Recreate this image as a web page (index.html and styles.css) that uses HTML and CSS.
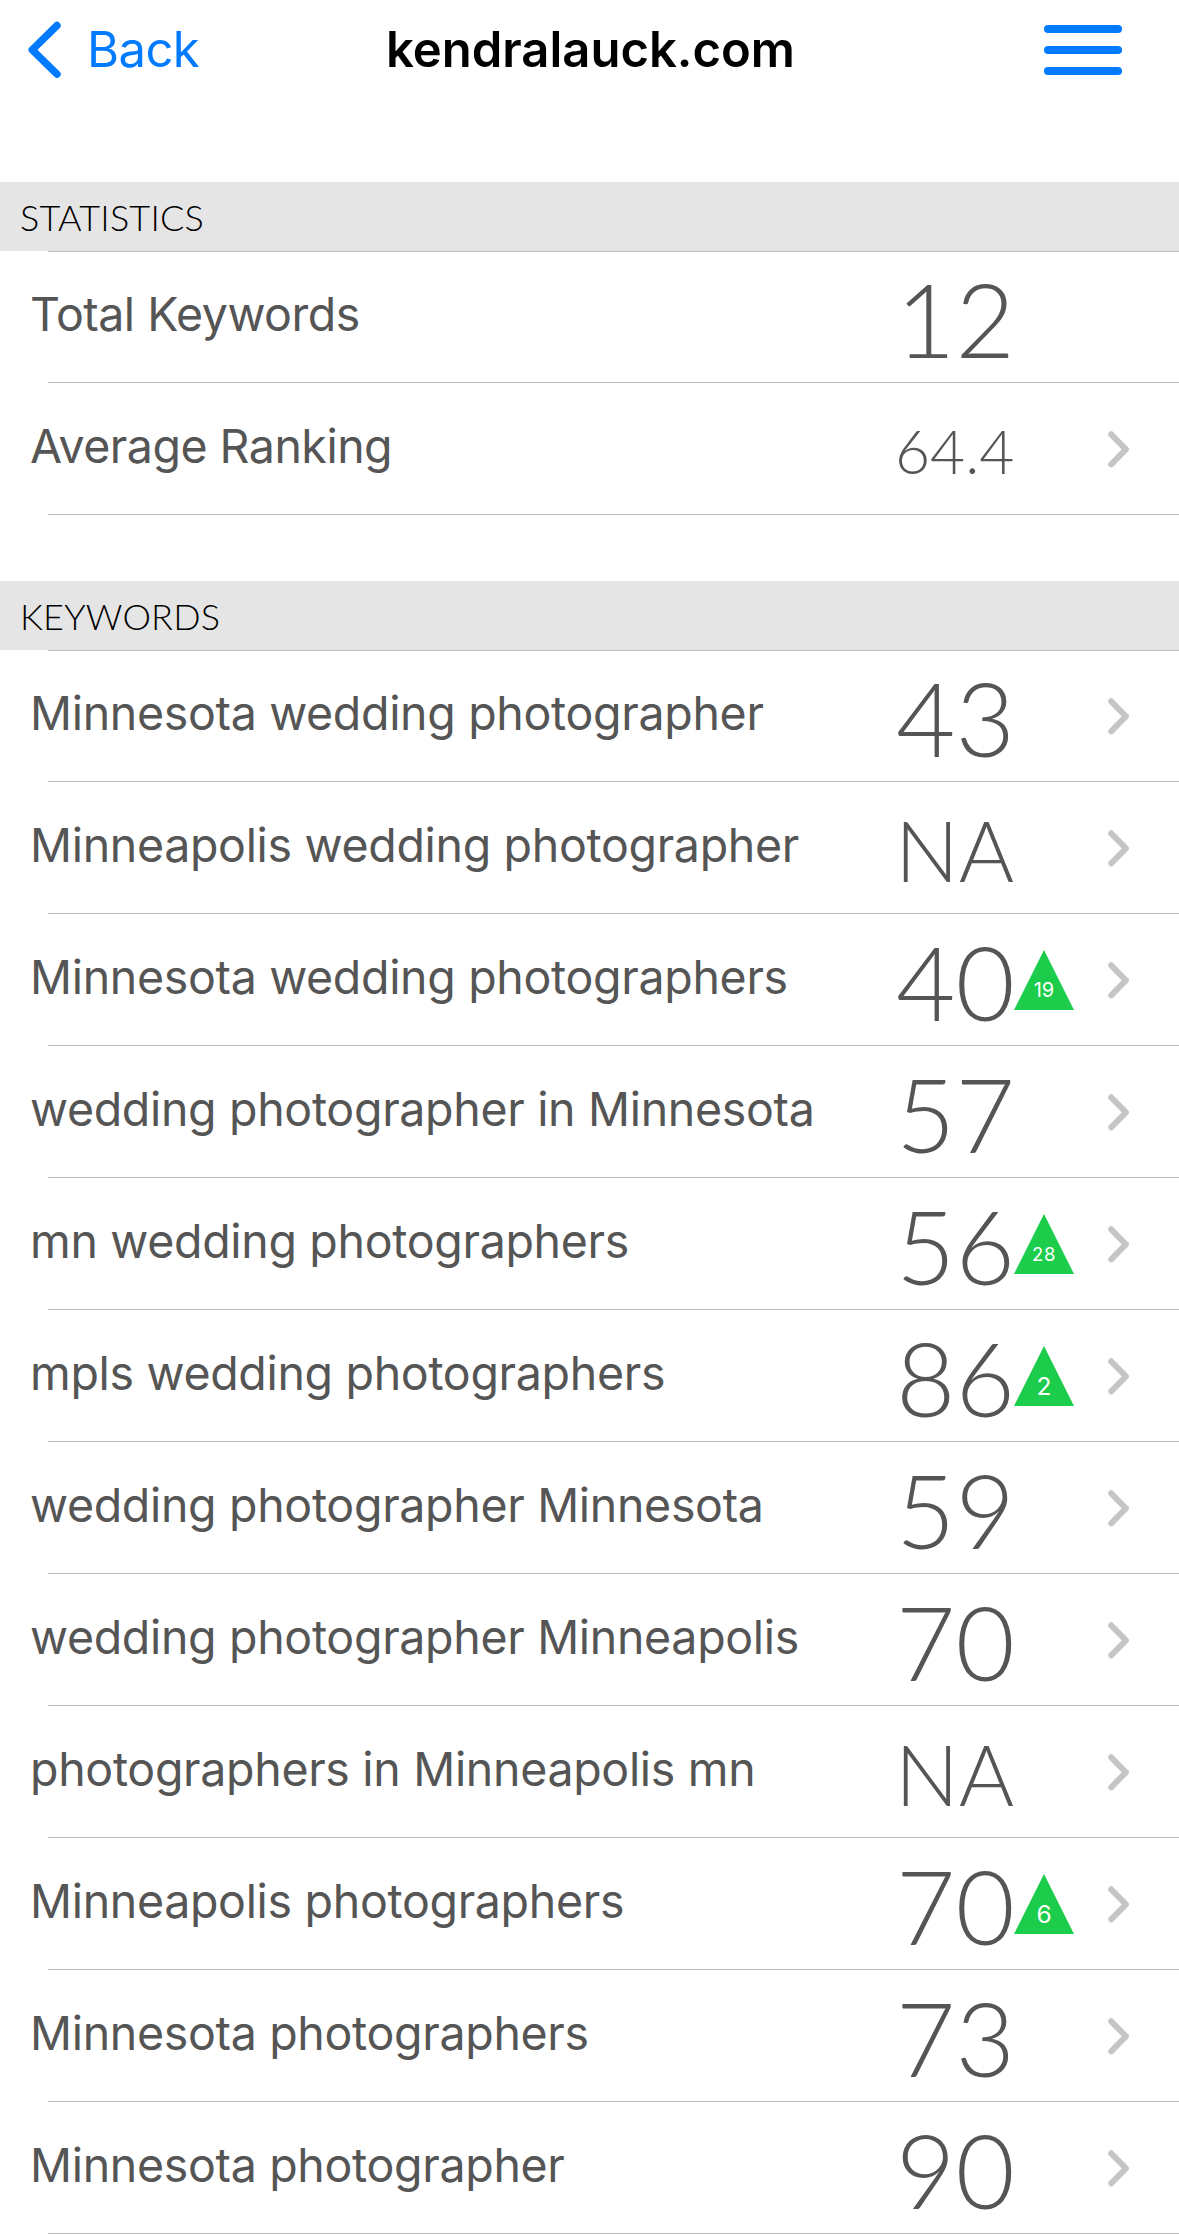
FILE: index.html
```
<!DOCTYPE html>
<html lang="en">
<head>
    <meta charset="UTF-8">
    <meta name="viewport" content="width=device-width, initial-scale=1.0">
    <title>kendralauck.com</title>
    <link rel="stylesheet" href="styles.css">
</head>
<body>
    <svg class="defs" width="0" height="0">
        <symbol id="chevron" viewBox="0 0 21 37">
            <path d="M3.2 3.3 L17.9 18.3 L3.2 33.3" fill="none" stroke="#c5c5c7" stroke-width="6" stroke-linecap="round" stroke-linejoin="round"/>
        </symbol>
    </svg>

    <!-- Navigation bar -->
    <header class="navbar">
        <a class="back">
            <svg class="back-icon" viewBox="0 0 33 58">
                <path d="M29 4.5 L4.2 28.8 L29 53.2" fill="none" stroke="#007aff" stroke-width="7.4" stroke-linecap="round" stroke-linejoin="round"/>
            </svg>
            <span>Back</span>
        </a>
        <h1 class="title">kendralauck.com</h1>
        <div class="menu">
            <span></span>
            <span></span>
            <span></span>
        </div>
    </header>

    <!-- Statistics -->
    <section class="section">
        <h2 class="section-title">Statistics</h2>
        <ul class="list">
            <li class="row">
                <span class="label stat">Total Keywords</span>
                <span class="value">12</span>
            </li>
            <li class="row">
                <span class="label stat">Average Ranking</span>
                <span class="value decimal">64.4</span>
                <svg class="chevron"><use href="#chevron"/></svg>
            </li>
        </ul>
    </section>

    <!-- Keywords -->
    <section class="section">
        <h2 class="section-title">Keywords</h2>
        <ul class="list">
            <li class="row">
                <span class="label">Minnesota wedding photographer</span>
                <span class="value">43</span>
                <svg class="chevron"><use href="#chevron"/></svg>
            </li>
            <li class="row">
                <span class="label">Minneapolis wedding photographer</span>
                <span class="value na">NA</span>
                <svg class="chevron"><use href="#chevron"/></svg>
            </li>
            <li class="row">
                <span class="label">Minnesota wedding photographers</span>
                <span class="value">40</span>
                <span class="up">19</span>
                <svg class="chevron"><use href="#chevron"/></svg>
            </li>
            <li class="row">
                <span class="label">wedding photographer in Minnesota</span>
                <span class="value">57</span>
                <svg class="chevron"><use href="#chevron"/></svg>
            </li>
            <li class="row">
                <span class="label">mn wedding photographers</span>
                <span class="value">56</span>
                <span class="up wide">28</span>
                <svg class="chevron"><use href="#chevron"/></svg>
            </li>
            <li class="row">
                <span class="label">mpls wedding photographers</span>
                <span class="value">86</span>
                <span class="up single">2</span>
                <svg class="chevron"><use href="#chevron"/></svg>
            </li>
            <li class="row">
                <span class="label">wedding photographer Minnesota</span>
                <span class="value">59</span>
                <svg class="chevron"><use href="#chevron"/></svg>
            </li>
            <li class="row">
                <span class="label">wedding photographer Minneapolis</span>
                <span class="value">70</span>
                <svg class="chevron"><use href="#chevron"/></svg>
            </li>
            <li class="row">
                <span class="label">photographers in Minneapolis mn</span>
                <span class="value na">NA</span>
                <svg class="chevron"><use href="#chevron"/></svg>
            </li>
            <li class="row">
                <span class="label">Minneapolis photographers</span>
                <span class="value">70</span>
                <span class="up single">6</span>
                <svg class="chevron"><use href="#chevron"/></svg>
            </li>
            <li class="row">
                <span class="label">Minnesota photographers</span>
                <span class="value">73</span>
                <svg class="chevron"><use href="#chevron"/></svg>
            </li>
            <li class="row">
                <span class="label">Minnesota photographer</span>
                <span class="value">90</span>
                <svg class="chevron"><use href="#chevron"/></svg>
            </li>
        </ul>
    </section>
</body>
</html>
```
FILE: styles.css
```
* {
    box-sizing: border-box;
    margin: 0;
    padding: 0;
}

body {
    font-family: Inter, sans-serif;
    background-color: #fff;
    color: #555;
}

.defs {
    display: block;
}

/* Navigation bar */
.navbar {
    display: grid;
    grid-template-columns: 1fr auto 1fr;
    align-items: start;
    height: 182px;
    padding: 0 57px 0 28px;
    line-height: 100px;
    font-size: 49px;
}

.back {
    display: flex;
    color: #007aff;
    letter-spacing: -0.6px;
}

.back-icon {
    width: 33px;
    height: 58px;
    margin: 21px 26px 0 0;
}

.title {
    font-size: 49px;
    font-weight: 600;
    color: #000;
    /* evens out the unequal side padding */
    margin: 0 -15px 0 16px;
}

.menu {
    display: flex;
    flex-direction: column;
    gap: 13px;
    width: 78px;
    margin-top: 25px;
    justify-self: end;
}

.menu span {
    height: 8px;
    border-radius: 4px;
    background-color: #007aff;
}

/* Sections */
.section + .section {
    margin-top: 66px;
}

.section-title {
    height: 69px;
    padding-left: 20px;
    background-color: #e5e5e5;
    color: #000;
    font: 300 36px/70px Lato, sans-serif;
    letter-spacing: 0.2px;
    text-transform: uppercase;
}

.list {
    list-style: none;
    background: linear-gradient(#bcbcbc, #bcbcbc) 48px 0 / 100% 1px no-repeat;
}

.row {
    display: grid;
    grid-template-columns: 865px 119px 94px 21px;
    align-items: start;
    height: 132px;
    padding-left: 30px;
    background: linear-gradient(#bcbcbc, #bcbcbc) 48px 100% / 100% 1px no-repeat;
}

.label {
    font-size: 46.5px;
    line-height: 126px;
    letter-spacing: -0.32px;
}

.label.stat {
    letter-spacing: -0.5px;
}

.value {
    padding-left: 1px;
    font: 300 102.5px/135px Lato, sans-serif;
}

.value.na {
    padding-left: 0;
    font-size: 84.5px;
}

.value.decimal {
    padding-left: 0;
    font-size: 60.5px;
}

/* Green triangle with the number of places gained */
.up {
    width: 60px;
    height: 60px;
    margin-top: 36px;
    background-color: #1ccc4b;
    clip-path: polygon(50% 0, 100% 100%, 0 100%);
    color: #fff;
    font-size: 20px;
    line-height: 80px;
    text-align: center;
}

.up.wide {
    font-size: 18.5px;
    letter-spacing: 0.6px;
}

.up.single {
    font-size: 24.5px;
}

.chevron {
    grid-column: 4;
    width: 21px;
    height: 37px;
    margin-top: 48px;
}
```
